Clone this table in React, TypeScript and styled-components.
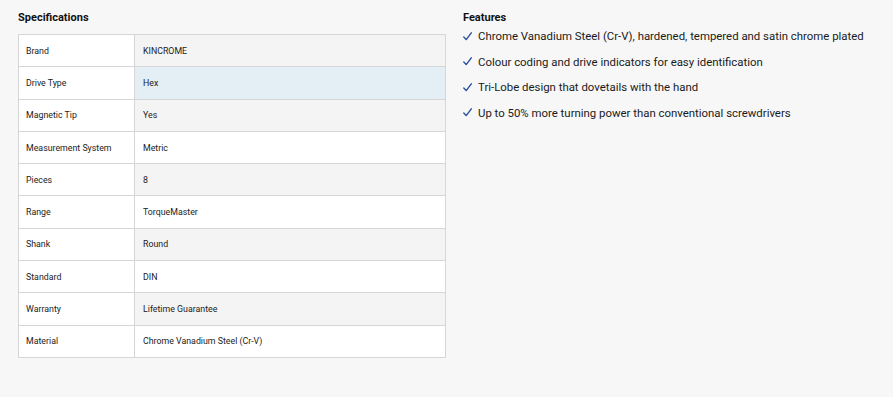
import React from 'react'
import styled, { createGlobalStyle } from 'styled-components'

const GlobalStyle = createGlobalStyle`
  html, body {
    margin: 0;
    padding: 0;
    background: #f7f7f7;
  }
  body {
    font-family: Roboto, 'Liberation Sans', sans-serif;
    color: #1a1a1a;
  }
`

const Page = styled.div`
  display: flex;
  align-items: flex-start;
  gap: 17px;
  padding: 10px 18px 0 18px;
  height: 397px;
  box-sizing: border-box;
`

const SpecsPanel = styled.section`
  width: 428px;
  flex: none;
`

const FeaturesPanel = styled.section`
  flex: 1;
`

const Heading = styled.h3<{ $gap: number }>`
  margin: 0 0 ${({ $gap }) => $gap}px 0;
  font-size: 11px;
  font-weight: 700;
  line-height: 16px;
  color: #111;
`

const SpecTable = styled.table`
  width: 100%;
  border-collapse: collapse;
  border: 1px solid #d6d6d6;
  font-size: 8.8px;
`

const SpecRow = styled.tr<{ $shade: 'white' | 'grey' | 'blue' }>`
  td {
    height: 31.3px;
    padding: 0 8px;
    border: 1px solid #d6d6d6;
    vertical-align: middle;
    color: #222;
  }
  td:last-child {
    background: ${({ $shade }) =>
      $shade === 'blue' ? '#e3eef5' : $shade === 'grey' ? '#f4f4f4' : '#ffffff'};
  }
`

const LabelCell = styled.td`
  width: 100px;
  background: #ffffff;
  padding-left: 7px !important;
`

const FeatureList = styled.ul`
  list-style: none;
  margin: 0;
  padding: 0;
  display: flex;
  flex-direction: column;
  gap: 9px;
`

const FeatureItem = styled.li`
  display: flex;
  align-items: center;
  gap: 6px;
  font-size: 11.4px;
  line-height: 16.5px;
  white-space: nowrap;
  color: #1a1a1a;
`

const Check = () => (
  <svg width="9" height="9" viewBox="0 0 9 9" style={{ flex: 'none' }}>
    <path d="M0.8 5 L3.2 7.6 L8.3 0.8" fill="none" stroke="#2a4f9c" strokeWidth="1.4" strokeLinecap="round" strokeLinejoin="round" />
  </svg>
)

const specs: [string, string][] = [
  ['Brand', 'KINCROME'],
  ['Drive Type', 'Hex'],
  ['Magnetic Tip', 'Yes'],
  ['Measurement System', 'Metric'],
  ['Pieces', '8'],
  ['Range', 'TorqueMaster'],
  ['Shank', 'Round'],
  ['Standard', 'DIN'],
  ['Warranty', 'Lifetime Guarantee'],
  ['Material', 'Chrome Vanadium Steel (Cr-V)'],
]

const features = [
  'Chrome Vanadium Steel (Cr-V), hardened, tempered and satin chrome plated',
  'Colour coding and drive indicators for easy identification',
  'Tri-Lobe design that dovetails with the hand',
  'Up to 50% more turning power than conventional screwdrivers',
]

export default function App() {
  return (
    <>
      <GlobalStyle />
      <Page>
        <SpecsPanel>
          <Heading $gap={8}>Specifications</Heading>
          <SpecTable>
            <tbody>
              {specs.map(([label, value], i) => (
                <SpecRow key={label} $shade={i === 1 ? 'blue' : i % 2 === 0 ? 'grey' : 'white'}>
                  <LabelCell>{label}</LabelCell>
                  <td>{value}</td>
                </SpecRow>
              ))}
            </tbody>
          </SpecTable>
        </SpecsPanel>
        <FeaturesPanel>
          <Heading $gap={2}>Features</Heading>
          <FeatureList>
            {features.map((f) => (
              <FeatureItem key={f}>
                <Check />
                {f}
              </FeatureItem>
            ))}
          </FeatureList>
        </FeaturesPanel>
      </Page>
    </>
  )
}
